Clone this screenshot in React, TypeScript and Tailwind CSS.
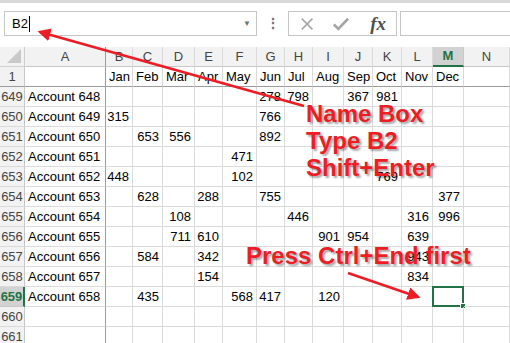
import { Fragment } from "react"

const letters = ["A", "B", "C", "D", "E", "F", "G", "H", "I", "J", "K", "L", "M", "N"]

const months = ["Jan", "Feb", "Mar", "Apr", "May", "Jun", "Jul", "Aug", "Sep", "Oct", "Nov", "Dec"]

// row number -> { column letter: value }
const data: Record<number, Record<string, string>> = {
    649: { G: "278", H: "798", J: "367", K: "981" },
    650: { B: "315", G: "766" },
    651: { C: "653", D: "556", G: "892" },
    652: { F: "471" },
    653: { B: "448", F: "102", K: "769" },
    654: { C: "628", E: "288", G: "755", M: "377" },
    655: { D: "108", H: "446", L: "316", M: "996" },
    656: { D: "711", E: "610", I: "901", J: "954", L: "639" },
    657: { C: "584", E: "342", L: "943" },
    658: { E: "154", L: "834" },
    659: { C: "435", F: "568", G: "417", I: "120" },
}

const rows = [1, 649, 650, 651, 652, 653, 654, 655, 656, 657, 658, 659, 660, 661]

const Cell = ({ row, col }: { row: number; col: string }) => {
    let text = ""
    let numeric = false
    if (row === 1) {
        const i = letters.indexOf(col)
        if (i >= 1 && i <= 12) text = months[i - 1]
    } else if (col === "A") {
        if (row <= 659) text = `Account ${row - 1}`
    } else {
        text = data[row]?.[col] ?? ""
        numeric = text !== ""
    }
    const selected = row === 659 && col === "M"
    const rightDark = col === "A"
    const bottomDark = row === 1

    return (
        <div
            className={`relative flex h-5 items-center overflow-visible whitespace-nowrap border-b border-r px-[3px] text-[13px] text-black ${
                numeric ? "justify-end" : "justify-start"
            } ${rightDark ? "border-r-[#9c9c9c]" : "border-r-[#dadada]"} ${
                bottomDark ? "border-b-[#9c9c9c]" : "border-b-[#dadada]"
            }`}
        >
            {text}
            {selected && (
                <div className="absolute -left-px -top-px h-[21px] w-[32px] border-2 border-[#217346]">
                    <div className="absolute -bottom-[4px] -right-[4px] h-[6px] w-[6px] border border-white bg-[#217346]" />
                </div>
            )}
        </div>
    )
}

const App = () => {
    return (
        <div
            className="relative h-[343px] w-[510px] overflow-hidden bg-white"
            style={{ fontFamily: '"Liberation Sans", Arial, sans-serif' }}
        >
            {/* Formula bar */}
            <div className="h-[47px] border-t-[3px] border-[#d8d8d8] pt-2">
                <div className="flex h-[25px] items-stretch">
                    <div className="ml-1 flex w-[253px] items-center justify-between border border-[#c6c6c6] pl-[7px] pr-[5px]">
                        <div className="flex items-center text-[13px] text-black">
                            B2
                            <span className="ml-px h-[16px] w-px bg-black" />
                        </div>
                        <span className="text-[8px] text-[#6f6f6f]">▼</span>
                    </div>
                    <div className="flex w-[31px] items-center justify-center text-[14px] font-bold text-[#6f6f6f]">⋮</div>
                    <div className="flex w-[109px] items-center border border-[#c6c6c6] px-[10px]">
                        <svg width="16" height="16" viewBox="0 0 16 16" className="ml-px">
                            <path d="M2 2 L14 14 M14 2 L2 14" stroke="#a6a6a6" strokeWidth="1.8" fill="none" />
                        </svg>
                        <svg width="18" height="16" viewBox="0 0 18 16" className="ml-[19px]">
                            <path d="M1 8.5 L6 13.5 L17 2" stroke="#a6a6a6" strokeWidth="3" fill="none" />
                        </svg>
                        <span
                            className="ml-[21px] text-[19px] font-bold italic leading-none text-[#505050]"
                            style={{ fontFamily: '"Liberation Serif", "Times New Roman", serif' }}
                        >
                            fx
                        </span>
                    </div>
                    <div className="ml-[3px] flex-1 border border-r-0 border-[#c6c6c6]" />
                </div>
            </div>

            {/* Sheet grid */}
            <div className="grid auto-rows-[20px] grid-cols-[25px_81px_27px_30px_32px_28px_34px_28px_28px_31px_29px_29px_31px_31px_1fr]">
                {/* Corner */}
                <div className="relative border-b border-r border-[#d0d0d0] bg-[#f2f2f2]">
                    <svg width="14" height="14" viewBox="0 0 14 14" className="absolute bottom-[3px] right-[3px]">
                        <path d="M14 0 L14 14 L0 14 Z" fill="#c9c9c9" />
                    </svg>
                </div>
                {letters.map((l) =>
                    l === "M" ? (
                        <div
                            key={l}
                            className="flex items-center justify-center border-b-2 border-r border-b-[#217346] border-r-[#c8c8c8] bg-[#d2d2d2] text-[13px] font-bold text-[#217346]"
                        >
                            {l}
                        </div>
                    ) : (
                        <div
                            key={l}
                            className={`flex items-center justify-center border-b border-r border-b-[#c8c8c8] bg-[#f2f2f2] text-[13px] text-[#444] ${
                                l === "A" ? "border-r-[#9c9c9c]" : "border-r-[#dadada]"
                            }`}
                        >
                            {l}
                        </div>
                    )
                )}

                {rows.map((r) => (
                    <Fragment key={r}>
                        {r === 659 ? (
                            <div className="flex items-center justify-center border-b border-r-2 border-b-[#c8c8c8] border-r-[#217346] bg-[#d2d2d2] text-[13px] font-bold text-[#217346]">
                                {r}
                            </div>
                        ) : (
                            <div
                                className={`flex items-center justify-center border-b border-r border-r-[#c8c8c8] bg-[#f2f2f2] text-[13px] text-[#444] ${
                                    r === 1 ? "border-b-[#9c9c9c]" : "border-b-[#dadada]"
                                }`}
                            >
                                {r}
                            </div>
                        )}
                        {letters.map((c) => (
                            <Cell key={c} row={r} col={c} />
                        ))}
                    </Fragment>
                ))}
            </div>

            {/* Annotation arrows */}
            <svg className="pointer-events-none absolute left-0 top-0" width="510" height="343" viewBox="0 0 510 343">
                <defs>
                    <marker id="head" markerWidth="5" markerHeight="5" refX="4" refY="2.5" orient="auto" markerUnits="strokeWidth">
                        <path d="M0 0 L5 2.5 L0 5 Z" fill="#ee1c24" />
                    </marker>
                </defs>
                <line x1="304" y1="106" x2="40" y2="32" stroke="#ee1c24" strokeWidth="2.6" markerEnd="url(#head)" />
                <line x1="348" y1="273" x2="418" y2="297" stroke="#ee1c24" strokeWidth="2.6" markerEnd="url(#head)" />
            </svg>

            {/* Annotation text */}
            <div className="pointer-events-none absolute left-[306px] top-[100px] text-[24px] font-bold leading-[27px] text-[#ee1c24] [text-shadow:2px_2px_2px_rgba(0,0,0,0.35)]">
                <div>Name Box</div>
                <div>Type B2</div>
                <div>Shift+Enter</div>
            </div>
            <div className="pointer-events-none absolute left-[246px] top-[242px] whitespace-nowrap text-[24px] font-bold leading-[27px] text-[#ee1c24] [text-shadow:2px_2px_2px_rgba(0,0,0,0.35)]">
                Press Ctrl+End first
            </div>
        </div>
    )
}

export default App
